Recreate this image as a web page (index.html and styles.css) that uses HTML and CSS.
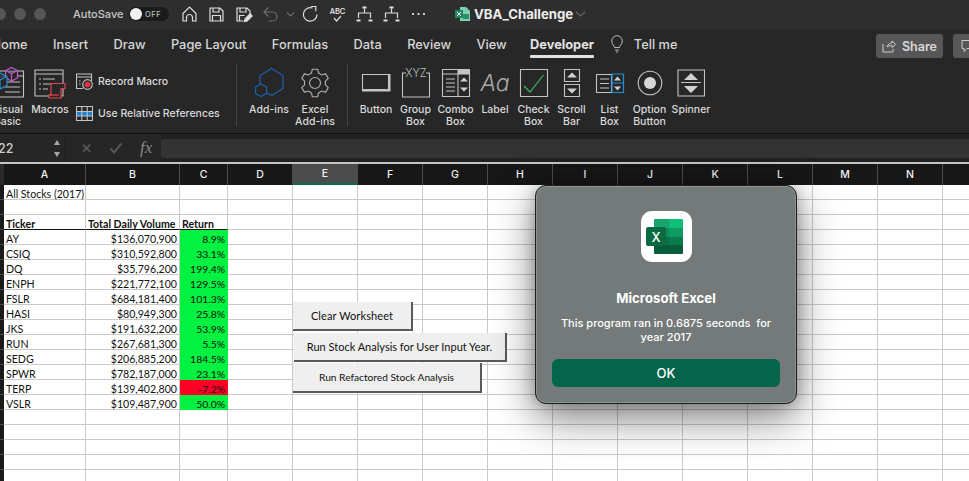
FILE: index.html
```html
<!doctype html>
<html lang="en">
<head>
  <meta charset="utf-8"/>
  <title>VBA_Challenge</title>
  <link rel="stylesheet" href="styles.css">
</head>
<body>

<svg class="defs" width="0" height="0">
  <symbol id="tree" viewBox="0 0 18 18">
    <path d="M7 2.500h4M1 15.500h4M13 15.500h4" stroke-width="2"/>
    <path d="M9 3.500V8M3 13V8h12v5"/>
  </symbol>
  <g id="gear-tooth">
    <polyline points="-5.25,-9.09 -3.59,-9.87 -2.67,-13.74 2.67,-13.74 3.59,-9.87 5.25,-9.09"/>
  </g>
</svg>

<header class="titlebar">
  <div class="lights"><i></i><i></i><i></i></div>
  <span class="autosave">AutoSave</span>
  <div class="toggle"><i></i><span>OFF</span></div>
  <div class="qat">
    <svg viewBox="0 0 18 18"><path d="M2.500 8.500 9 2l6.500 6.500V16H12v-3.500a3 3 0 0 0-6 0V16H2.500z"/></svg>
    <svg viewBox="0 0 18 18"><path d="M2.500 3h10l3 3v10h-13zM5.500 3v4h6V3M5 16v-5.500h8V16"/></svg>
    <svg viewBox="0 0 18 18"><path d="M9 16H2.500V3h10l3 3v3M5.500 3v4h6V3M5 16v-5.500h5"/><path d="m10 16.500.6-2.600 5-5 2 2-5 5z" fill="#ddd"/></svg>
    <svg class="dim" viewBox="0 0 18 18"><path d="M7 2.500 2.500 7 7 11.500M2.500 7H11a4.500 4.500 0 0 1 0 9H7"/></svg>
    <svg class="dim chev" viewBox="0 0 13 18"><path d="m3 7.500 3.500 3.500L10 7.500"/></svg>
    <svg viewBox="0 0 18 18"><path d="M15.500 9.500A6.800 6.800 0 1 1 11 3"/><path d="M9.500 1.500h4.800v4.800" stroke-width="1.200"/></svg>
    <svg viewBox="0 0 18 18"><text class="abc" x="9" y="9" text-anchor="middle">ABC</text><path d="m5.500 13 2.500 3 4.500-5"/></svg>
    <svg viewBox="0 0 18 18"><use href="#tree"/></svg>
    <svg viewBox="0 0 18 18"><use href="#tree"/></svg>
    <svg viewBox="0 0 18 18"><circle class="dot" cx="3.500" cy="9" r="1.100"/><circle class="dot" cx="9" cy="9" r="1.100"/><circle class="dot" cx="14.500" cy="9" r="1.100"/></svg>
  </div>
  <svg class="docicon" width="16" height="16" viewBox="0 0 16 16">
    <path d="M5 1h6l4 4v10H5z" fill="#7fcfb0"/>
    <path d="M8 8h6v5H8z" fill="#2a8f68"/>
    <rect x="0" y="4" width="8" height="8" fill="#1f8a5f"/>
    <path d="m2 6 4 4M6 6l-4 4" stroke="#fff" stroke-width="1"/>
  </svg>
  <strong class="docname">VBA_Challenge</strong>
  <svg class="docchev" width="11" height="8" viewBox="0 0 11 8"><path d="m1 2 4.500 4L10 2"/></svg>
</header>

<nav class="tabs">
  <a>Home</a><a>Insert</a><a>Draw</a><a>Page Layout</a><a>Formulas</a><a>Data</a><a>Review</a><a>View</a>
  <a class="active">Developer</a>
  <svg class="bulb" width="14" height="18" viewBox="0 0 14 18"><path d="M4.500 12.500c0-2-2.800-3-2.800-6.500a5.300 5.300 0 0 1 10.600 0c0 3.500-2.800 4.500-2.800 6.500zM5 15h4M6 17h2"/></svg>
  <a>Tell me</a>
  <div class="tab-actions">
    <button class="share">
      <svg width="14" height="14" viewBox="0 0 14 14"><path d="M5 8c1-3 3-4 5-4V2l3.500 3.500L10 8.500V6.500C8 6.500 6 7 5 8zM1 5v8h10v-3"/></svg>
      Share
    </button>
    <button class="comment">
      <svg width="14" height="14" viewBox="0 0 14 14"><path d="M1 1.500h12v8H6l-3 3v-3H1z"/></svg>
    </button>
  </div>
</nav>

<section class="ribbon">
  <div class="group group-macros">
    <div class="tool">
      <div class="icon">
        <svg width="49" height="32" viewBox="0 0 49 32">
          <path class="line" d="M5 4h35.500v26H5zM5 9h35.500M22 15h15M22 20h15M22 25h15"/>
          <path d="m28.500.500 6 3v7.500l-6 3-6-3V3.500zM22.500 3.500l6 3 6-3M28.500 6.500V14" fill="#272727" stroke="#c45ccf"/>
          <path d="m17 6 7 3.500v9L17 22l-7-3.500v-9zM10 9.500l7 3.500 7-3.500M17 13v9" fill="#272727" stroke="#2b8fd6"/>
        </svg>
      </div>
      <span>Visual<br>Basic</span>
    </div>
    <div class="tool">
      <div class="icon">
        <svg width="32" height="32" viewBox="0 0 32 32">
          <path class="line" d="M1 3h28v26H1zM1 7h28M5 12h2M9 12h12M5 17h2M9 17h12M5 22h2M9 22h5"/>
          <path d="M17 16.500h14v5h-4v9.500H15v-3h2z" fill="#272727" stroke="#e3434a"/>
          <path d="M15 28h10" stroke="#e3434a"/>
        </svg>
      </div>
      <span>Macros</span>
    </div>
    <ul class="mini">
      <li>
        <svg width="17" height="17" viewBox="0 0 17 17">
          <path class="line" d="M7 15.500H.5V1h15v7M.5 4h15M3 8h1.500M3 11h1.500"/>
          <circle cx="11.500" cy="11.500" r="4.800" fill="#272727" stroke="#bbb"/>
          <circle cx="11.500" cy="11.500" r="2.800" fill="#e8343f" stroke="none"/>
        </svg>
        Record Macro
      </li>
      <li>
        <svg width="17" height="15" viewBox="0 0 17 15">
          <rect x="1" y="5.500" width="15" height="4.500" fill="#1f7fd0" stroke="none"/>
          <path class="line" d="M.5.500h16v14H.5zM.5 5.500h16M.5 10h16M5.800.500v14M11.200.500v14"/>
        </svg>
        Use Relative References
      </li>
    </ul>
  </div>

  <div class="group group-addins">
    <div class="tool">
      <div class="icon">
        <svg width="36" height="32" viewBox="0 0 36 32">
          <path d="M9 17V8.500l11.500-7 11.500 7v13l-11.500 7-4.500-2.500" stroke="#1b62ad"/>
          <path d="m10 17 5.500 3v6.500L10 29.500l-5.500-3V20z" stroke="#1b62ad"/>
        </svg>
      </div>
      <span>Add-ins</span>
    </div>
    <div class="tool">
      <div class="icon">
        <svg class="gear" width="30" height="30" viewBox="-15 -15 30 30">
          <use href="#gear-tooth"/>
          <use href="#gear-tooth" transform="rotate(60)"/>
          <use href="#gear-tooth" transform="rotate(120)"/>
          <use href="#gear-tooth" transform="rotate(180)"/>
          <use href="#gear-tooth" transform="rotate(240)"/>
          <use href="#gear-tooth" transform="rotate(300)"/>
          <circle r="5.500"/>
        </svg>
      </div>
      <span>Excel<br>Add-ins</span>
    </div>
  </div>

  <div class="group group-controls">
    <div class="tool">
      <div class="icon">
        <svg width="30" height="20" viewBox="0 0 30 20">
          <path class="line" d="M1.500 1.500h26v15h-26z"/>
          <path d="M1 16.500h27V1h1.500v17.500H1z" fill="#c4c4c4" stroke="none"/>
        </svg>
      </div>
      <span>Button</span>
    </div>
    <div class="tool">
      <div class="icon">
        <svg width="30" height="30" viewBox="0 0 30 30">
          <path class="line" d="M5 5H1.500v24h27V5H25"/>
          <text class="xyz" x="15" y="8.500" text-anchor="middle">XYZ</text>
        </svg>
      </div>
      <span>Group<br>Box</span>
    </div>
    <div class="tool">
      <div class="icon">
        <svg width="30" height="30" viewBox="0 0 30 30">
          <rect x="17" y="1" width="12" height="5" fill="#c4c4c4" stroke="none"/>
          <path class="line" d="M1.500 1.500h27v27h-27zM1.500 6h27M17 1.500v27M5 11h9M5 15h9M5 19h9M5 23h9"/>
          <path class="tri" d="m23 9.500 4 4h-8zM23 23.500l-4-4h8z"/>
        </svg>
      </div>
      <span>Combo<br>Box</span>
    </div>
    <div class="tool">
      <div class="icon"><em class="aa">Aa</em></div>
      <span>Label</span>
    </div>
    <div class="tool">
      <div class="icon">
        <svg width="30" height="30" viewBox="0 0 30 30">
          <path class="line" d="M1.500 1.500h27v27h-27z"/>
          <path d="m5 18 6 6L24.500 7" stroke="#3fb45f"/>
        </svg>
      </div>
      <span>Check<br>Box</span>
    </div>
    <div class="tool">
      <div class="icon">
        <svg width="18" height="30" viewBox="0 0 18 30">
          <path class="line" d="M1.500 1.500h15v12h-15zM1.500 16.500h15v12h-15z"/>
          <path class="tri" d="m9 4.500 5 5H4zM9 25.500l-5-5h10z"/>
        </svg>
      </div>
      <span>Scroll<br>Bar</span>
    </div>
    <div class="tool">
      <div class="icon">
        <svg width="30" height="20" viewBox="0 0 30 20">
          <path class="line" d="M1.500 1.500h15v18h-15zM5 6h9M5 10.500h9M5 15h9"/>
          <path d="M17 1h11.500v18.500H17zM17 10h11.500" stroke="#1f8fd6"/>
          <path class="tri" d="m22.500 3.500 3.500 4h-7zM22.500 17.500l-3.500-4h7z"/>
        </svg>
      </div>
      <span>List<br>Box</span>
    </div>
    <div class="tool">
      <div class="icon">
        <svg width="26" height="26" viewBox="0 0 26 26">
          <circle class="line" cx="13" cy="13" r="11.800"/>
          <circle cx="13" cy="13" r="6" fill="#d6d6d6" stroke="none"/>
        </svg>
      </div>
      <span>Option<br>Button</span>
    </div>
    <div class="tool">
      <div class="icon">
        <svg width="28" height="28" viewBox="0 0 28 28">
          <path class="line" d="M1 1h26.500v26H1zM4 13.500h20"/>
          <path class="tri" d="m14 4 7 7H7zM14 24l-7-7h14z"/>
        </svg>
      </div>
      <span>Spinner</span>
    </div>
  </div>
</section>

<div class="formulabar">
  <div class="namebox">
    <span>22</span>
    <div class="stepper"><i></i><i></i></div>
  </div>
  <div class="fx-tools">
    <span class="cancel">&#10005;</span>
    <svg width="14" height="12" viewBox="0 0 14 12"><path d="m1.500 6.500 3.500 4 7.500-9" stroke="#555" stroke-width="2"/></svg>
    <em class="fx">fx</em>
  </div>
  <div class="formula-input"></div>
</div>

<main class="sheet">
  <div class="colheads">
    <div>A</div><div>B</div><div>C</div><div>D</div><div class="sel">E</div>
    <div>F</div><div>G</div><div>H</div><div>I</div><div>J</div><div>K</div><div>L</div><div>M</div><div>N</div><div></div>
  </div>
  <div class="cells">
    <div class="rowheads"></div>
    <table class="grid">
      <colgroup><col class="col-a"><col class="col-b"><col class="col-c"><col class="col-d"></colgroup>
      <tr><td>All Stocks (2017)</td><td></td><td></td><td></td></tr>
      <tr><td></td><td></td><td></td><td></td></tr>
      <tr class="thead"><td>Ticker</td><td>Total Daily Volume</td><td>Return</td><td class="plain"></td></tr>
      <tr><td>AY</td><td class="num">$136,070,900</td><td class="up">8.9%</td><td></td></tr>
      <tr><td>CSIQ</td><td class="num">$310,592,800</td><td class="up">33.1%</td><td></td></tr>
      <tr><td>DQ</td><td class="num">$35,796,200</td><td class="up">199.4%</td><td></td></tr>
      <tr><td>ENPH</td><td class="num">$221,772,100</td><td class="up">129.5%</td><td></td></tr>
      <tr><td>FSLR</td><td class="num">$684,181,400</td><td class="up">101.3%</td><td></td></tr>
      <tr><td>HASI</td><td class="num">$80,949,300</td><td class="up">25.8%</td><td></td></tr>
      <tr><td>JKS</td><td class="num">$191,632,200</td><td class="up">53.9%</td><td></td></tr>
      <tr><td>RUN</td><td class="num">$267,681,300</td><td class="up">5.5%</td><td></td></tr>
      <tr><td>SEDG</td><td class="num">$206,885,200</td><td class="up">184.5%</td><td></td></tr>
      <tr><td>SPWR</td><td class="num">$782,187,000</td><td class="up">23.1%</td><td></td></tr>
      <tr><td>TERP</td><td class="num">$139,402,800</td><td class="down">-7.2%</td><td></td></tr>
      <tr><td>VSLR</td><td class="num">$109,487,900</td><td class="up">50.0%</td><td></td></tr>
      <tr><td></td><td></td><td></td><td></td></tr>
      <tr><td></td><td></td><td></td><td></td></tr>
      <tr><td></td><td></td><td></td><td></td></tr>
      <tr><td></td><td></td><td></td><td></td></tr>
      <tr><td></td><td></td><td></td><td></td></tr>
    </table>
    <div class="blank"></div>
  </div>

  <button class="macro-btn btn-clear">Clear Worksheet</button>
  <button class="macro-btn btn-run">Run Stock Analysis for User Input Year.</button>
  <button class="macro-btn btn-refactor">Run Refactored Stock Analysis</button>

  <div class="dialog">
    <svg class="app-icon" width="51" height="51" viewBox="0 0 51 51">
      <rect width="51" height="51" rx="11" fill="#fff"/>
      <path d="M13 8h15v9H13z" fill="#17a56c"/>
      <path d="M28 8h13a1 1 0 0 1 1 1v8H28z" fill="#0dc07a"/>
      <path d="M13 17h15v9H13z" fill="#108a58"/>
      <path d="M28 17h14v9H28z" fill="#0e9a60"/>
      <path d="M13 26h15v8H13z" fill="#0b6f46"/>
      <path d="M28 26h14v8H28z" fill="#0b7a4c"/>
      <path d="M13 34h29v8a1 1 0 0 1-1 1H14a1 1 0 0 1-1-1z" fill="#095c3b"/>
      <rect x="5" y="16" width="20" height="19" rx="2" fill="#0a6b42"/>
      <text class="app-x" x="15" y="31" text-anchor="middle">X</text>
    </svg>
    <h2>Microsoft Excel</h2>
    <p>This program ran in 0.6875 seconds &nbsp;for year 2017</p>
    <button class="ok">OK</button>
  </div>
</main>

</body>
</html>
```

FILE: styles.css
```css
:root{--ui:"Inter","Noto Sans",sans-serif;--cell:"Lato","Open Sans",sans-serif;--bar:#2e2e2e;--rib:#272727;--fg:#dcdcdc;--grid:#cacaca}
*{box-sizing:border-box}
html,body{margin:0;height:481px;overflow:hidden}
body{width:969px;background:#fff;font-family:var(--ui);color:var(--fg)}
svg{fill:none;stroke:#ddd;stroke-width:1.2;display:block;flex:none}
.defs{position:absolute}
.line{stroke:#c4c4c4;stroke-width:1.1}
.tri{fill:#d0d0d0;stroke:none}
svg.gear{stroke:#aaa}

/* title bar */
.titlebar{display:flex;align-items:center;height:30px;background:var(--bar);margin-left:-6px;padding-bottom:2px}
.lights{display:flex;gap:8px;margin-right:27px}
.lights i{width:12px;height:12px;border-radius:50%;background:#565656}
.autosave{font-size:11px;font-weight:500;color:#c8c8c8;width:56px}
.toggle{display:flex;align-items:center;width:40px;height:14px;border-radius:7px;background:#1b1b1b;padding-left:1px;gap:3px}
.toggle i{width:12px;height:12px;border-radius:50%;background:#f2f2f2}
.toggle span{font-size:7.500px;font-weight:500;letter-spacing:.5px;color:#bbb}
.qat{display:flex;align-items:center;margin-left:6.500px}
.qat svg{width:27px;height:18px}
.qat svg.chev{width:13px}
.qat svg.dim{stroke:#6c6c6c}
.qat .abc{font-size:7.500px;fill:#eee;stroke:none;font-weight:500}
.qat .dot{fill:#eee;stroke:none}
.docicon{margin-left:23.500px;stroke:none}
.docname{margin-left:3px;font-size:13.200px;font-weight:700;color:#eee}
.docchev{margin-left:2px;stroke:#666}

/* tabs */
.tabs{display:flex;align-items:center;height:32px;background:var(--rib);margin-left:-8.500px;gap:25.400px;padding-bottom:4px;position:relative}
.tabs a{font-size:12.800px;font-weight:500;color:#d6d6d6;white-space:nowrap;position:relative}
.tabs a.active{font-weight:700;color:#e2e2e2;margin-left:-2px}
.tabs a.active::after{content:"";position:absolute;left:0;right:0;bottom:-6px;height:2.500px;border-radius:1px;background:#e2e2e2}
.bulb{margin-left:-9px;margin-right:-16px;stroke:#bbb;stroke-width:1}
.tab-actions{display:flex;gap:10px;margin-left:auto;margin-right:-26px;margin-top:4px}
.share,.comment{display:flex;align-items:center;justify-content:center;gap:6px;height:24px;border:0;border-radius:3px;background:#575757;color:#d8d8d8;font:600 12.500px var(--ui);padding:0}
.share{width:67px}
.comment{width:42px;justify-content:flex-start;padding-left:8px}
.share svg,.comment svg{stroke:#ccc;stroke-width:1}

/* ribbon */
.ribbon{display:flex;height:72px;background:var(--rib);margin-left:-17px;padding-top:2px;border-bottom:1px solid #0e0e0e}
.group{display:flex;height:62px;border-right:1px solid #444}
.group-macros{width:254px}
.group-addins{width:111px;padding-left:9px}
.group-addins .tool{width:46px}
.group-controls{display:grid;grid-template-columns:40px 39px 41px 38px 39px 37px 39px 41px 42px;border:0;padding-left:8px}
.group-macros .tool:first-child{width:49px}
.group-macros .tool:nth-child(2){width:36px}
.tool{display:flex;flex-direction:column;align-items:center;height:70px;font-size:10.500px;line-height:12px;font-weight:500;text-align:center;color:#dadada}
.icon{display:flex;align-items:center;justify-content:center;height:38px;margin-bottom:2px;width:100%;flex:none}
.aa{font:italic 300 23px "Inter",sans-serif;color:#aaa}
.xyz{font-size:11px;fill:#bbb;stroke:none;font-weight:300}
.mini{list-style:none;margin:0;padding:0 0 0 8px}
.mini li{display:flex;align-items:center;gap:5px;height:32px;font-size:10.500px;font-weight:500;white-space:nowrap;color:#dadada}
.mini li:first-child{margin-top:1px}

/* formula bar */
.formulabar{display:flex;align-items:center;height:28px;background:#212121}
.namebox{display:flex;align-items:center;justify-content:space-between;width:66px;height:100%;padding:0 5px 0 0;background:#262626;border-right:1px solid #1b1b1b;font-size:12.500px;font-weight:500;color:#ccc}
.namebox span{margin-left:-2px}
.stepper{display:flex;flex-direction:column;gap:7px}
.stepper i{display:block;width:0;height:0;border:3.500px solid transparent;border-top:0;border-bottom:5px solid #a8a8a8}
.stepper i:last-child{transform:scaleY(-1)}
.fx-tools{display:flex;align-items:center;width:95px;padding-left:15px;gap:17px;height:100%;background:#262626}
.cancel{font-size:13px;font-weight:700;color:#555}
.fx{font:italic 17px "Liberation Serif",serif;color:#888}
.formula-input{flex:1;height:19px;background:#333;border-radius:3px 0 0 3px}

/* sheet */
.sheet{position:relative;height:317px;border-top:2px solid #c4c4c4}
.colheads{display:grid;grid-template-columns:82px 94px 48px repeat(11,65px) 65px;height:21px;margin-left:4px;background:#171717;box-shadow:-4px 0 0 #2a2a2a}
.colheads div{display:flex;align-items:center;justify-content:center;font-size:10.500px;font-weight:500;color:#f2f2f2;border-right:1px solid #4c4c4c}
.colheads .sel{background:#4b4b4b;border-bottom:2px solid #0f6b45}
.cells{display:flex;height:296px;overflow:hidden}
.rowheads{width:4px;flex:none;background:repeating-linear-gradient(#1a1a1a 0 14px,#4a4a4a 14px 15px)}
.grid{table-layout:fixed;width:289px;border-collapse:separate;border-spacing:0;font:10.600px/10px var(--cell);color:#111;flex:none}
.col-a{width:82px}
.col-b{width:94px}
.col-c{width:48px}
.col-d{width:65px}
.grid td{height:15px;padding:4px 0 0 2px;vertical-align:top;border-right:1px solid var(--grid);border-bottom:1px solid var(--grid);white-space:nowrap}
.grid .thead td{font-weight:700;border-bottom:1px solid #111}
.grid .thead .plain{border-bottom-color:var(--grid)}
.grid .num{text-align:right;padding-right:2px}
.grid .up,.grid .down{text-align:right;padding-right:3px;border-right:0;border-bottom:0;font-size:10.400px}
.grid .up{background:#03f140}
.grid .down{background:#fe0026}
.blank{flex:1;background:repeating-linear-gradient(to right,transparent 0 64px,var(--grid) 64px 65px),repeating-linear-gradient(transparent 0 14px,var(--grid) 14px 15px)}

/* macro buttons sit on top of the grid */
.macro-btn{position:absolute;height:29px;background:#efefef;border:0;border-right:2px solid #5a5a5a;border-bottom:2px solid #5a5a5a;font:11px var(--cell);color:#111;padding:0}
.btn-clear{left:293px;top:138px;width:120px;letter-spacing:.1px}
.btn-run{left:294px;top:169px;width:213px}
.btn-refactor{left:293px;top:199px;width:189px;height:30px;font-size:10.200px}

/* alert */
.dialog{position:absolute;left:535px;top:21px;width:262px;height:219px;display:flex;flex-direction:column;align-items:center;padding:25px 17px 0;background:#747a79;border:1px solid #1d1d1d;border-radius:11px;box-shadow:inset 0 0 0 1px #8e9291,0 14px 42px rgba(0,0,0,.5),0 0 14px rgba(0,0,0,.25);color:#fff;text-align:center}
.app-icon{stroke:none}
.app-x{font:500 13px var(--ui);fill:#fff;stroke:none}
.dialog h2{margin:28px 0 0;font-size:13.200px;line-height:16px;font-weight:700}
.dialog p{margin:10px 0 0;width:218px;font-size:11px;line-height:14px;font-weight:500}
.ok{margin-top:15px;width:228px;height:28px;border:0;border-radius:6px;background:#04654a;color:#fff;font:500 13px var(--ui)}
```
